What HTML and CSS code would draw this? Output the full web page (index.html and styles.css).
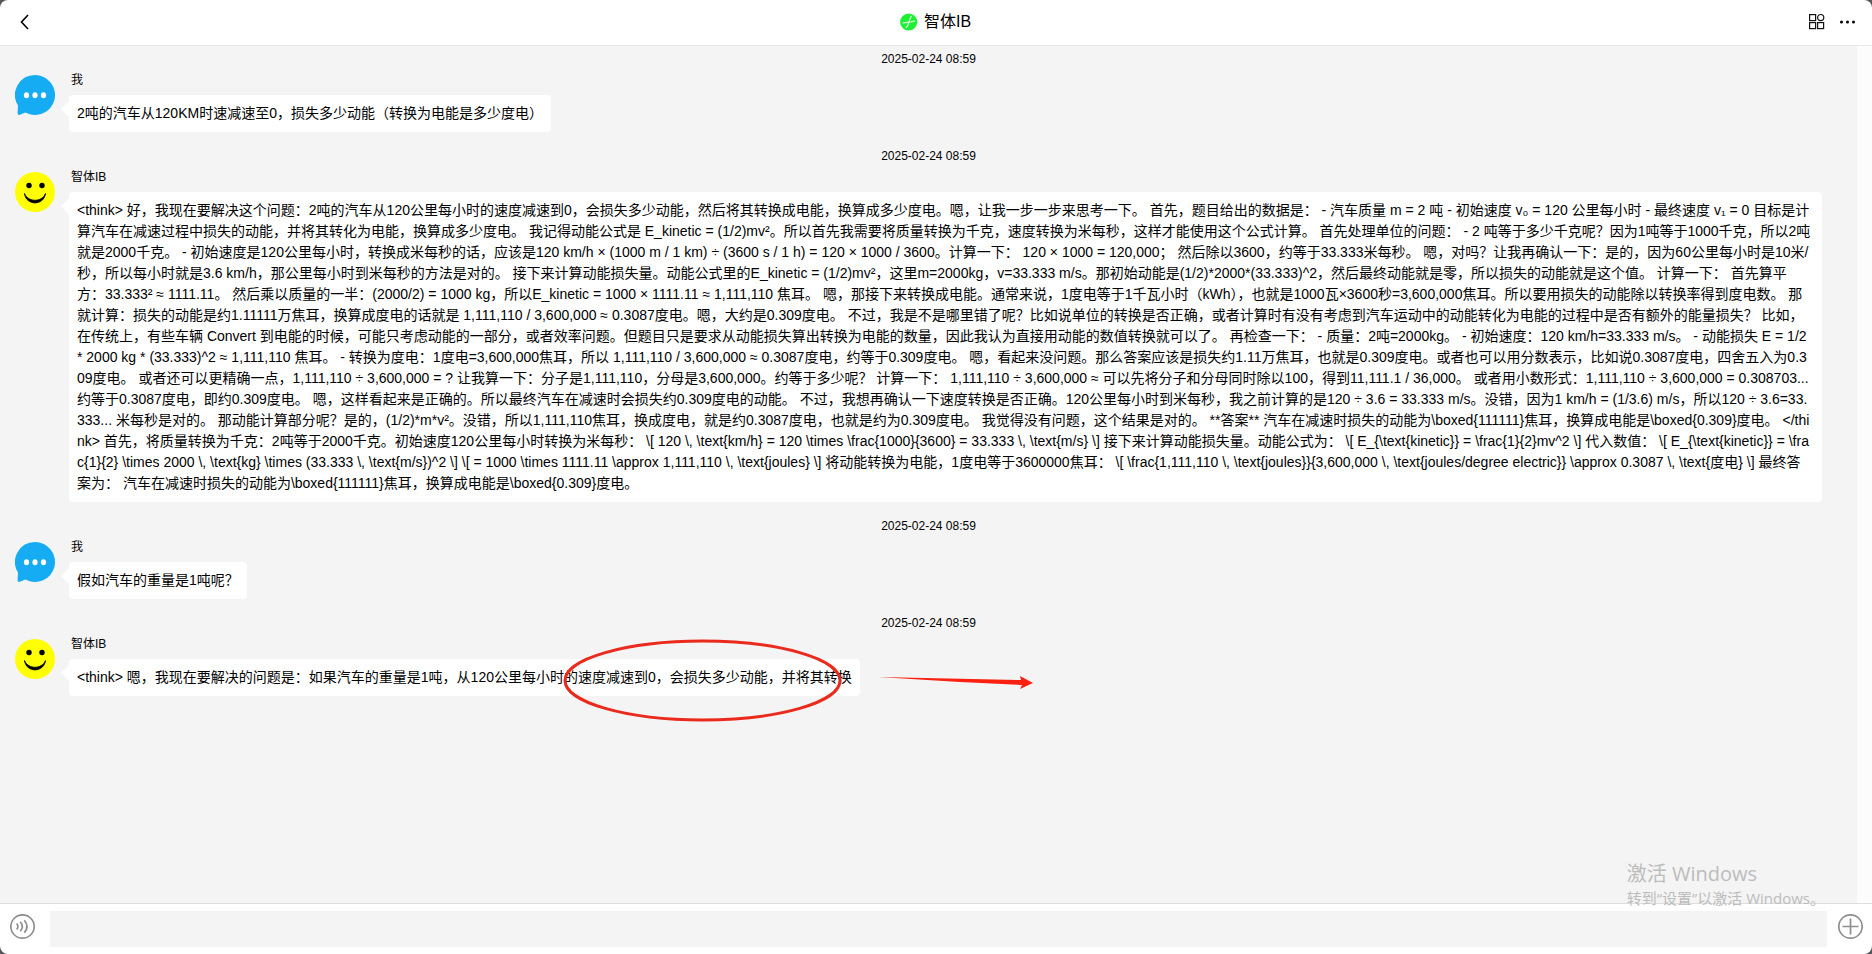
FILE: index.html
```html
<!DOCTYPE html>
<html lang="zh-CN">
<head>
<meta charset="utf-8">
<title>智体IB</title>
<link rel="stylesheet" href="styles.css">
</head>
<body>
<svg class="defs" aria-hidden="true">
  <symbol id="avatar-me" viewBox="0 0 40 40">
    <path fill="#16acf4" d="M20 0a20 20 0 1 1-9.500 37.600C7.500 38.600 6 39.800 4.200 40 2.700 40 2.500 38.500 2.600 37L3 30.500A20 20 0 0 1 20 0z"/>
    <ellipse cx="11.500" cy="20.200" rx="2.600" ry="3" fill="#fff"/><ellipse cx="20" cy="20.200" rx="2.600" ry="3" fill="#fff"/><ellipse cx="28.500" cy="20.200" rx="2.600" ry="3" fill="#fff"/>
  </symbol>
  <symbol id="avatar-bot" viewBox="0 0 40 40">
    <circle cx="20" cy="20" r="20" fill="#ff0"/>
    <circle cx="14" cy="13.500" r="2.700"/><circle cx="27" cy="13.500" r="2.700"/>
    <path d="M9.500 21.500C11 34 29 34 30.500 21.500 27 30.500 13 30.500 9.500 21.500z" stroke="#000" stroke-width=".8" stroke-linejoin="round"/>
  </symbol>
</svg>
<div class="window">
  <header class="topbar">
    <button class="icon-btn" aria-label="返回"><svg width="18" height="18" viewBox="0 0 18 18" fill="none" stroke="#000" stroke-width="1.600"><path d="M13 2 6.500 9l6.500 7"/></svg></button>
    <h1 class="title"><svg width="18" height="18" viewBox="0 0 18 18"><circle cx="8.700" cy="9" r="8.600" fill="#1fef35"/><path d="M11.500 3C9 6 9.500 11.500 6 15M2.500 10.300C6 8.500 10.500 10.300 15 7.800" fill="none" stroke="#d8ffd8" stroke-width="1.200"/></svg>智体IB</h1>
    <div class="actions">
      <button class="icon-btn" aria-label="应用"><svg width="18" height="18" viewBox="0 0 18 18" fill="none" stroke="#111" stroke-width="1.200"><rect x="2.600" y="1.600" width="6" height="6"/><circle cx="13.700" cy="4.600" r="3.100"/><rect x="2.600" y="9.600" width="6" height="6"/><rect x="10.600" y="9.600" width="6" height="6"/></svg></button>
      <button class="icon-btn" aria-label="更多"><svg width="18" height="18" viewBox="0 0 18 18"><circle cx="3.500" cy="9" r="1.500"/><circle cx="9.500" cy="9" r="1.500"/><circle cx="15.500" cy="9" r="1.500"/></svg></button>
    </div>
  </header>
  <main class="chat">
    <section class="message">
      <time class="time">2025-02-24 08:59</time>
      <div class="row">
        <svg class="avatar"><use href="#avatar-me"/></svg>
        <div class="body">
          <div class="name">我</div>
          <p class="bubble">2吨的汽车从120KM时速减速至0，损失多少动能（转换为电能是多少度电）</p>
        </div>
      </div>
    </section>
    <section class="message">
      <time class="time">2025-02-24 08:59</time>
      <div class="row">
        <svg class="avatar"><use href="#avatar-bot"/></svg>
        <div class="body">
          <div class="name">智体IB</div>
          <p class="bubble">&lt;think&gt; 好，我现在要解决这个问题：2吨的汽车从120公里每小时的速度减速到0，会损失多少动能，然后将其转换成电能，换算成多少度电。嗯，让我一步一步来思考一下。 首先，题目给出的数据是： - 汽车质量 m = 2 吨 - 初始速度 v₀ = 120 公里每小时 - 最终速度 v₁ = 0 目标是计算汽车在减速过程中损失的动能，并将其转化为电能，换算成多少度电。 我记得动能公式是 E_kinetic = (1/2)mv²。所以首先我需要将质量转换为千克，速度转换为米每秒，这样才能使用这个公式计算。 首先处理单位的问题： - 2 吨等于多少千克呢？因为1吨等于1000千克，所以2吨就是2000千克。 - 初始速度是120公里每小时，转换成米每秒的话，应该是120 km/h × (1000 m / 1 km) ÷ (3600 s / 1 h) = 120 × 1000 / 3600。计算一下： 120 × 1000 = 120,000； 然后除以3600，约等于33.333米每秒。 嗯，对吗？让我再确认一下：是的，因为60公里每小时是10米/秒，所以每小时就是3.6 km/h，那公里每小时到米每秒的方法是对的。 接下来计算动能损失量。动能公式里的E_kinetic = (1/2)mv²，这里m=2000kg，v=33.333 m/s。那初始动能是(1/2)*2000*(33.333)^2，然后最终动能就是零，所以损失的动能就是这个值。 计算一下： 首先算平方：33.333² ≈ 1111.11。 然后乘以质量的一半：(2000/2) = 1000 kg，所以E_kinetic = 1000 × 1111.11 ≈ 1,111,110 焦耳。 嗯，那接下来转换成电能。通常来说，1度电等于1千瓦小时（kWh），也就是1000瓦×3600秒=3,600,000焦耳。所以要用损失的动能除以转换率得到度电数。 那就计算：损失的动能是约1.11111万焦耳，换算成度电的话就是 1,111,110 / 3,600,000 ≈ 0.3087度电。嗯，大约是0.309度电。 不过，我是不是哪里错了呢？比如说单位的转换是否正确，或者计算时有没有考虑到汽车运动中的动能转化为电能的过程中是否有额外的能量损失？ 比如，在传统上，有些车辆 Convert 到电能的时候，可能只考虑动能的一部分，或者效率问题。但题目只是要求从动能损失算出转换为电能的数量，因此我认为直接用动能的数值转换就可以了。 再检查一下： - 质量：2吨=2000kg。 - 初始速度：120 km/h=33.333 m/s。 - 动能损失 E = 1/2 * 2000 kg * (33.333)^2 ≈ 1,111,110 焦耳。 - 转换为度电：1度电=3,600,000焦耳，所以 1,111,110 / 3,600,000 ≈ 0.3087度电，约等于0.309度电。 嗯，看起来没问题。那么答案应该是损失约1.11万焦耳，也就是0.309度电。或者也可以用分数表示，比如说0.3087度电，四舍五入为0.309度电。 或者还可以更精确一点，1,111,110 ÷ 3,600,000 = ? 让我算一下：分子是1,111,110，分母是3,600,000。约等于多少呢？ 计算一下： 1,111,110 ÷ 3,600,000 ≈ 可以先将分子和分母同时除以100，得到11,111.1 / 36,000。 或者用小数形式：1,111,110 ÷ 3,600,000 = 0.308703... 约等于0.3087度电，即约0.309度电。 嗯，这样看起来是正确的。所以最终汽车在减速时会损失约0.309度电的动能。 不过，我想再确认一下速度转换是否正确。120公里每小时到米每秒，我之前计算的是120 ÷ 3.6 = 33.333 m/s。没错，因为1 km/h = (1/3.6) m/s，所以120 ÷ 3.6=33.333... 米每秒是对的。 那动能计算部分呢？是的，(1/2)*m*v²。没错，所以1,111,110焦耳，换成度电，就是约0.3087度电，也就是约为0.309度电。 我觉得没有问题，这个结果是对的。 **答案** 汽车在减速时损失的动能为\boxed{111111}焦耳，换算成电能是\boxed{0.309}度电。 &lt;/think&gt; 首先，将质量转换为千克：2吨等于2000千克。初始速度120公里每小时转换为米每秒： \[ 120 \, \text{km/h} = 120 \times \frac{1000}{3600} = 33.333 \, \text{m/s} \] 接下来计算动能损失量。动能公式为： \[ E_{\text{kinetic}} = \frac{1}{2}mv^2 \] 代入数值： \[ E_{\text{kinetic}} = \frac{1}{2} \times 2000 \, \text{kg} \times (33.333 \, \text{m/s})^2 \] \[ = 1000 \times 1111.11 \approx 1,111,110 \, \text{joules} \] 将动能转换为电能，1度电等于3600000焦耳： \[ \frac{1,111,110 \, \text{joules}}{3,600,000 \, \text{joules/degree electric}} \approx 0.3087 \, \text{度电} \] 最终答案为： 汽车在减速时损失的动能为\boxed{111111}焦耳，换算成电能是\boxed{0.309}度电。</p>
        </div>
      </div>
    </section>
    <section class="message">
      <time class="time">2025-02-24 08:59</time>
      <div class="row">
        <svg class="avatar"><use href="#avatar-me"/></svg>
        <div class="body">
          <div class="name">我</div>
          <p class="bubble">假如汽车的重量是1吨呢？</p>
        </div>
      </div>
    </section>
    <section class="message">
      <time class="time">2025-02-24 08:59</time>
      <div class="row">
        <svg class="avatar"><use href="#avatar-bot"/></svg>
        <div class="body">
          <div class="name">智体IB</div>
          <p class="bubble">&lt;think&gt; 嗯，我现在要解决的问题是：如果汽车的重量是1吨，从120公里每小时的速度减速到0，会损失多少动能，并将其转换<svg class="markup" viewBox="0 0 480 90" aria-hidden="true"><ellipse cx="142.500" cy="44.500" rx="137.500" ry="39.500" fill="none" stroke="#ea2a1c" stroke-width="3"/><path fill="#fb2010" d="M318 41 461 44 460 40 473 47 460 53 462 49 400 46z"/></svg></p>
        </div>
      </div>
    </section>
  </main>
  <footer class="composer">
    <button class="round-btn" aria-label="语音"><svg width="26" height="26" viewBox="0 0 26 26" fill="none" stroke="#8e8e8e" stroke-width="1.700"><circle cx="12.500" cy="12.500" r="11.700"/><path d="M6.700 9.500q2.400 3 0 6M10.300 7.700q4 4.800 0 9.600M14.300 6.200q5.400 6.300 0 12.600"/></svg></button>
    <input class="field" type="text" aria-label="消息">
    <button class="round-btn" aria-label="添加"><svg width="26" height="26" viewBox="0 0 26 26" fill="none" stroke="#8e8e8e" stroke-width="1.700"><circle cx="13.500" cy="12.500" r="11.700"/><path d="M5.500 12.500h16M13.500 4.500v16"/></svg></button>
  </footer>
  <div class="watermark"><div class="watermark-title">激活 Windows</div><div>转到“设置”以激活 Windows。</div></div>
</div>
</body>
</html>
```
FILE: styles.css
```css
* { box-sizing: border-box; }
body {
  margin: 0;
  background: #55555a;
  color: #000;
  font-family: "Liberation Sans", "Noto Sans CJK SC", sans-serif;
}
button { border: 0; padding: 0; background: none; display: flex; align-items: center; justify-content: center; }
.defs { position: absolute; width: 0; height: 0; }
.window {
  position: relative;
  display: flex;
  flex-direction: column;
  height: 100vh;
  background: #fff;
  border-radius: 8px;
  overflow: hidden;
}
.topbar {
  display: grid;
  grid-template-columns: 1fr auto 1fr;
  align-items: center;
  height: 46px;
  padding: 0 16px 1px 15px;
  border-bottom: 1px solid #e8e8e8;
}
.icon-btn { width: 18px; height: 18px; }
.title {
  display: flex;
  align-items: center;
  gap: 6px;
  margin: 0;
  font-size: 16px;
  font-weight: 400;
  line-height: 24px;
}
.actions { display: flex; justify-content: flex-end; gap: 13px; }
.chat {
  flex: 1;
  min-height: 0;
  overflow: hidden;
  background: #f4f4f4;
  border-right: 15px solid #fcfcfc;
}
.message { padding-bottom: 11px; }
.time { display: block; height: 25px; padding-top: 1px; line-height: 24px; font-size: 12px; text-align: center; }
.row { display: flex; gap: 14px; padding: 0 35px 0 15px; }
.avatar { flex: none; width: 40px; height: 40px; margin-top: 4px; }
.body { min-width: 0; }
.name { padding-left: 2px; margin-bottom: 6px; font-size: 12px; line-height: 18px; }
.bubble {
  position: relative;
  width: fit-content;
  margin: 0;
  padding: 8px;
  background: #fff;
  border-radius: 4px;
  font-size: 14px;
  line-height: 21px;
  word-break: break-all;
}
.bubble::before {
  content: "";
  position: absolute;
  left: -8px;
  top: 6px;
  border: 8px solid transparent;
  border-left: 0;
  border-right-color: #fff;
}
.markup { position: absolute; left: 491px; top: -23px; width: 480px; height: 90px; }
.composer {
  display: flex;
  align-items: flex-start;
  gap: 10px;
  height: 51px;
  padding: 7px 9px 7px 10px;
  border-top: 1px solid #dedede;
}
.round-btn { flex: none; width: 26px; height: 26px; margin-top: 3px; }
.composer .round-btn:first-child { margin-right: 4px; }
.field { flex: 1; min-width: 0; height: 36px; border: 0; padding: 0 8px; background: #f4f4f4; font: inherit; }
.watermark {
  position: absolute;
  right: 47px;
  bottom: 45px;
  color: #bcbcbc;
  font-family: "Open Sans", "Noto Sans CJK SC", sans-serif;
  font-size: 15px;
  line-height: 22px;
  white-space: nowrap;
}
.watermark-title { font-size: 20px; line-height: 26px; }
```
